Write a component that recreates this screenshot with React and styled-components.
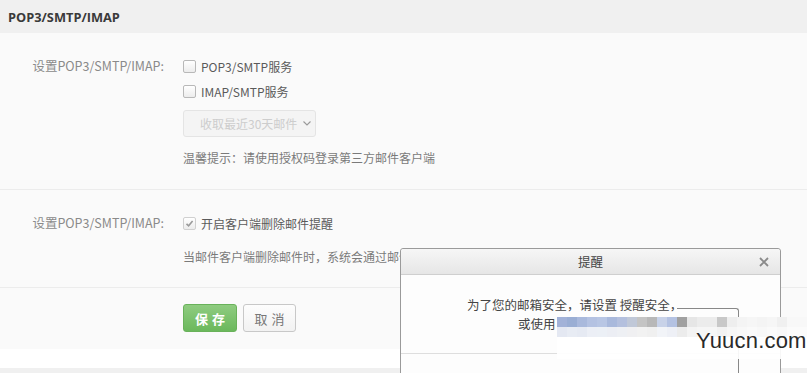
import React from "react";
import styled, { createGlobalStyle } from "styled-components";

const Global = createGlobalStyle`
  html, body { margin: 0; padding: 0; background: #fff; }
  body {
    font-family: "Noto Sans CJK SC", "Noto Sans", sans-serif;
    font-size: 12px;
    color: #333;
    overflow: hidden;
  }
`;

const Page = styled.div`
  position: relative;
  width: 807px;
  height: 373px;
  overflow: hidden;
  background: #fff;
`;

const Header = styled.div`
  height: 33px;
  background: #f0f0f0;
  display: flex;
  align-items: center;
  padding-left: 8px;
  font-family: "Open Sans", "Noto Sans CJK SC", sans-serif;
  font-weight: 700;
  font-size: 12.8px;
  color: #3a3a3a;
`;

const Body = styled.div`
  background: #fafafa;
`;

const Section = styled.div`
  display: grid;
  grid-template-columns: 164px 1fr;
  column-gap: 19px;
  padding: ${(p) => p.$pad};
  border-bottom: ${(p) => (p.$last ? "none" : "1px solid #ececec")};
`;

const Label = styled.div`
  text-align: right;
  color: #8a8a8a;
  line-height: 24px;
  height: 24px;
  white-space: nowrap;
  font-size: 12.5px;
`;

const Content = styled.div`
  display: flex;
  flex-direction: column;
  align-items: flex-start;
`;

const CheckRow = styled.label`
  display: flex;
  align-items: center;
  gap: 5px;
  height: ${(p) => p.$h || 25}px;
  color: #5a5a5a;
  white-space: nowrap;
  font-size: 12px;
`;

const Box = styled.span`
  width: 11px;
  height: 11px;
  border: 1px solid ${(p) => (p.$checked ? "#d0d0d0" : "#b8b8b8")};
  border-radius: 2px;
  background: linear-gradient(#ffffff, #ececec);
  display: inline-flex;
  align-items: center;
  justify-content: center;
  flex: none;
`;

const Select = styled.div`
  margin-top: 6px;
  width: 133px;
  height: 27px;
  box-sizing: border-box;
  border: 1px solid #e4e4e4;
  border-radius: 3px;
  background: #f4f4f4;
  color: #cdcdcd;
  display: flex;
  align-items: center;
  gap: 6px;
  padding-left: 16px;
  font-size: 12px;
`;

const Hint = styled.div`
  margin-top: ${(p) => p.$mt}px;
  line-height: 20px;
  color: #7a7a7a;
  white-space: nowrap;
  font-size: 12px;
`;

const Buttons = styled.div`
  display: flex;
  gap: 6px;
`;

const Button = styled.button`
  width: ${(p) => p.$w}px;
  height: 28px;
  border-radius: 3px;
  font-family: inherit;
  font-size: 13px;
  letter-spacing: 4px;
  text-indent: 4px;
  padding: 0;
  cursor: pointer;
  border: 1px solid ${(p) => (p.$primary ? "#69b25a" : "#c8c8c8")};
  background: ${(p) =>
    p.$primary ? "linear-gradient(#8fcc80, #6bb85c)" : "linear-gradient(#fdfdfd, #f2f2f2)"};
  color: ${(p) => (p.$primary ? "#fff" : "#777")};
  font-weight: ${(p) => (p.$primary ? 700 : 400)};
`;

const Gap = styled.div`
  height: 19px;
  background: #fff;
`;

const Footer = styled.div`
  height: 10px;
  background: #f0f0f0;
`;

/* Dialog overlay */
const Dialog = styled.div`
  position: absolute;
  left: 400px;
  top: 248px;
  width: 379px;
  height: 160px;
  border: 1px solid #9a9a9a;
  border-radius: 3px 3px 0 0;
  background: #fdfdfd;
  display: flex;
  flex-direction: column;
`;

const DialogHead = styled.div`
  height: 25px;
  border-bottom: 1px solid #cfcfcf;
  background: linear-gradient(#f6f6f6, #e6e6e6);
  border-radius: 3px 3px 0 0;
  display: grid;
  grid-template-columns: 1fr auto;
  align-items: center;
  position: relative;
`;

const DialogTitle = styled.div`
  position: absolute;
  left: 0;
  right: 0;
  text-align: center;
  color: #444;
  font-size: 12.5px;
`;

const Close = styled.span`
  grid-column: 2;
  margin-right: 11px;
  display: flex;
`;

const DialogBody = styled.div`
  padding: 20px 0 0 66px;
  height: 58px;
  border-bottom: 1px solid #dedede;
  color: #444;
  font-size: 12.5px;
`;

const MsgLine = styled.div`
  line-height: 19px;
  padding-left: ${(p) => p.$indent || 0}px;
  white-space: nowrap;
`;

const Mosaic = styled.div`
  position: absolute;
  left: 557px;
  top: 317px;
  width: 250px;
  height: 42px;
  background: rgba(255, 255, 255, 0.92);
`;

const InnerFrame = styled.div`
  position: absolute;
  left: 677px;
  top: 308px;
  width: 61px;
  height: 80px;
  border-top: 1px solid #888;
  border-right: 1px solid #888;
  border-radius: 0 3px 0 0;
`;

const Watermark = styled.div`
  position: absolute;
  left: 696px;
  top: 328px;
  font-family: "Liberation Sans", Arial, sans-serif;
  font-size: 22px;
  color: #2a2a2a;
  letter-spacing: 0.2px;
`;

const row1 = [
  "#a2b2d8", "#9aaed4", "#a9b9dc", "#b4c2e2", "#b8c6e4", "#a9b9dc", "#b4c0de",
  "#c0c8d8", "#c4c4c4", "#b8b8b8", "#c8d2e8", "#b4c2e2", "#a0a0a0", "#e6e6e6",
  "#ececec", "#ececec", "#c8c8c8", "#eeeeee", "#f4f4f4", "#f6f6f6", "#f4f4f4",
  "#f6f6f6", "#f0f0f0", "#f8f8f8", "#f8f8f8",
];
const row2 = [
  "#e4e8f2", "#e8ecf4", "#e6eaf3", "#eceff6", "#ecf0f6", "#eceef4", "#eef0f4",
  "#f0f0f2", "#f2f2f2", "#f0f0f0", "#f2f4f8", "#eef0f6", "#ececec", "#f4f4f4",
  "#f6f6f6", "#f6f6f6", "#f2f2f2", "#f6f6f6", "#f8f8f8", "#fafafa", "#f8f8f8",
  "#fafafa", "#f8f8f8", "#fbfbfb", "#fbfbfb",
];

function MosaicBlocks() {
  return (
    <svg width="250" height="20" style={{ display: "block" }}>
      {row1.map((c, i) => (
        <rect key={"a" + i} x={i * 10} y={0} width={10} height={10} fill={c} />
      ))}
      {row2.map((c, i) => (
        <rect key={"b" + i} x={i * 10} y={10} width={10} height={10} fill={c} />
      ))}
    </svg>
  );
}

function Check({ checked }) {
  return (
    <Box $checked={checked}>
      {checked && (
        <svg width="9" height="9" viewBox="0 0 9 9">
          <path d="M1.5 4.8 L3.6 6.8 L7.6 2" fill="none" stroke="#9a9a9a" strokeWidth="1.6" />
        </svg>
      )}
    </Box>
  );
}

export default function App() {
  return (
    <Page>
      <Global />
      <Header>POP3/SMTP/IMAP</Header>
      <Body>
        <Section $pad="21px 0 21px 0">
          <Label>设置POP3/SMTP/IMAP:</Label>
          <Content>
            <CheckRow>
              <Check />
              POP3/SMTP服务
            </CheckRow>
            <CheckRow>
              <Check />
              IMAP/SMTP服务
            </CheckRow>
            <Select>
              收取最近30天邮件
              <svg width="8" height="5" viewBox="0 0 8 5">
                <path d="M0.5 0.5 L4 4 L7.5 0.5" fill="none" stroke="#999" strokeWidth="1.1" />
              </svg>
            </Select>
            <Hint $mt={11}>温馨提示：请使用授权码登录第三方邮件客户端</Hint>
          </Content>
        </Section>
        <Section $pad="21px 0 20px 0">
          <Label>设置POP3/SMTP/IMAP:</Label>
          <Content>
            <CheckRow $h={24}>
              <Check checked />
              开启客户端删除邮件提醒
            </CheckRow>
            <Hint $mt={12}>当邮件客户端删除邮件时，系统会通过邮件通知您</Hint>
          </Content>
        </Section>
        <Section $pad="16px 0 17px 0" $last>
          <div />
          <Buttons>
            <Button $primary $w={54}>保存</Button>
            <Button $w={53}>取消</Button>
          </Buttons>
        </Section>
      </Body>
      <Gap />
      <Footer />

      <Dialog>
        <DialogHead>
          <DialogTitle>提醒</DialogTitle>
          <Close>
            <svg width="10" height="10" viewBox="0 0 10 10">
              <path d="M1 1 L9 9 M9 1 L1 9" stroke="#8a8a8a" strokeWidth="1.8" />
            </svg>
          </Close>
        </DialogHead>
        <DialogBody>
          <MsgLine>为了您的邮箱安全，请设置 授醒安全，</MsgLine>
          <MsgLine $indent={51}>或使用</MsgLine>
        </DialogBody>
      </Dialog>
      <InnerFrame />
      <Mosaic>
        <MosaicBlocks />
      </Mosaic>
      <Watermark>Yuucn.com</Watermark>
    </Page>
  );
}
